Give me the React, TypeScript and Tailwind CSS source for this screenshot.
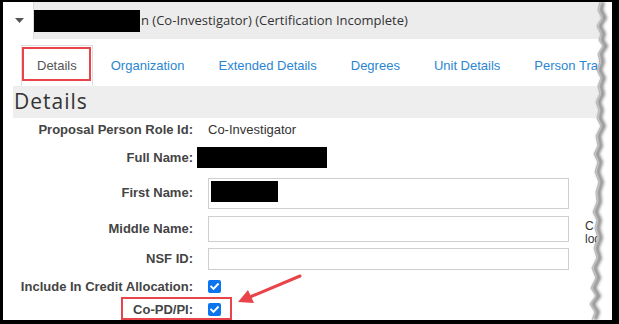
import React from "react";

const tabs = ["Details", "Organization", "Extended Details", "Degrees", "Unit Details", "Person Training"];

function Check() {
  return (
    <span className="flex h-[13px] w-[13px] items-center justify-center rounded-[2px] bg-[#0b74ee]">
      <svg width="11" height="11" viewBox="0 0 11 11">
        <path d="M2.2 5.6 L4.5 7.9 L8.9 3.2" fill="none" stroke="#fff" strokeWidth="1.9" strokeLinecap="square" />
      </svg>
    </span>
  );
}

function Row({ label, h, children }: { label: string; h: string; children?: React.ReactNode }) {
  return (
    <div className={`flex items-center ${h}`}>
      <div className="w-[190px] shrink-0 text-right text-[13px] font-bold text-[#444]">{label}</div>
      <div className="ml-[15px] flex flex-1 items-center">{children}</div>
    </div>
  );
}

export default function App() {
  const edge: [number, number][] = [
    [18, 0], [16, 8], [20, 16], [15, 24], [19, 32], [17, 38], [21, 44], [16, 52], [18, 60],
    [15, 68], [19, 76], [16, 84], [18, 92], [14, 100], [17, 108], [15, 116], [19, 124],
    [14, 134], [16, 144], [12, 152], [16, 160], [13, 170], [17, 180], [14, 190], [15, 200],
    [11, 210], [15, 218], [13, 226], [16, 236], [12, 246], [15, 256], [10, 266], [14, 276],
    [9, 286], [14, 294], [8, 302], [13, 310], [10, 318],
  ];
  const edgeStr = edge.map(([x, y]) => `${x},${y}`).join(" ");
  const poly = `${edgeStr} 30,318 30,0`;

  return (
    <div className="h-[324px] w-[619px] bg-black pb-[4px] pl-[3px] pr-[7px] pt-[2px] font-['Liberation_Sans',Arial,sans-serif]">
      <div className="relative flex h-full w-full flex-col overflow-hidden bg-white">
        {/* header */}
        <div className="flex h-[37px] shrink-0">
          <div className="flex w-[31px] shrink-0 items-center justify-center border-r border-[#dcdcdc] bg-white">
            <svg width="9" height="5" viewBox="0 0 9 5" className="ml-[2px]">
              <path d="M0 0 H9 L4.5 5 Z" fill="#555" />
            </svg>
          </div>
          <div className="flex flex-1 items-center bg-[#ececec]">
            <div className="h-[22px] w-[106px] bg-black" />
            <span className="ml-[1px] whitespace-nowrap font-['Open_Sans',sans-serif] text-[13px] text-[#333]">
              n (Co-Investigator) (Certification Incomplete)
            </span>
          </div>
        </div>

        {/* tabs */}
        <div className="flex h-[47px] shrink-0 items-end gap-[2px] overflow-hidden pl-[18px]">
          {tabs.map((t, i) => (
            <div
              key={t}
              className={`relative flex h-[41px] shrink-0 items-center whitespace-nowrap border px-[15px] text-[13px] ${
                i === 0 ? "border-[#dddddd] border-b-white bg-white text-[#555]" : "border-transparent text-[#2a86d3]"
              }`}
            >
              {t}
              {i === 0 && (
                <div className="absolute left-[0px] top-[1px] h-[34px] w-[69px] border-2 border-[#e8444a]" />
              )}
            </div>
          ))}
        </div>

        {/* heading */}
        <div className="ml-[10px] flex h-[32px] shrink-0 items-center bg-[#eeeeee] pl-[1px]">
          <span className="font-['Open_Sans',sans-serif] text-[21px] tracking-[1px] text-[#333]">Details</span>
        </div>

        {/* form */}
        <div className="flex flex-col">
          <Row label="Proposal Person Role Id:" h="h-[24px]">
            <span className="text-[13px] text-[#333]">Co-Investigator</span>
          </Row>
          <Row label="Full Name:" h="h-[31px]">
            <div className="ml-[-11px] h-[21px] w-[130px] bg-black" />
          </Row>
          <Row label="First Name:" h="h-[40px]">
            <div className="flex h-[31px] w-[361px] items-start border border-[#cfcfcf] pl-[2px] pt-[2px]">
              <div className="h-[21px] w-[67px] bg-black" />
            </div>
          </Row>
          <Row label="Middle Name:" h="h-[31px]">
            <div className="h-[26px] w-[361px] border border-[#cfcfcf]" />
            <div className="ml-[16px] mt-[9px] self-start text-[12px] leading-[13px] text-[#333]">
              C<br />log
            </div>
          </Row>
          <Row label="NSF ID:" h="h-[29px]">
            <div className="h-[22px] w-[361px] border border-[#cfcfcf]" />
          </Row>
          <Row label="Include In Credit Allocation:" h="h-[27px]">
            <Check />
          </Row>
          <Row label="Co-PD/PI:" h="h-[19px]">
            <Check />
          </Row>
        </div>

        {/* red box around Co-PD/PI */}
        <div className="absolute left-[118px] top-[295px] h-[23px] w-[111px] border-2 border-[#e8444a]" />

        {/* arrow */}
        <svg className="absolute left-[225px] top-[265px]" width="80" height="45" viewBox="0 0 80 45">
          <line x1="72" y1="9" x2="22" y2="30" stroke="#e8444a" strokeWidth="3" strokeLinecap="round" />
          <path d="M10 35 L20 23 L26 36 Z" fill="#e8444a" />
        </svg>

        {/* torn edge */}
        <svg className="absolute right-0 top-0" width="30" height="318" viewBox="0 0 30 318">
          <defs>
            <filter id="blur" x="-50%" y="-10%" width="200%" height="120%">
              <feGaussianBlur stdDeviation="1.6" />
            </filter>
          </defs>
          <polygon points={poly} fill="#ffffff" />
          <polyline
            points={edge.map(([x, y]) => `${x + 3},${y}`).join(" ")}
            fill="none"
            stroke="#8a8a8a"
            strokeWidth="4"
            filter="url(#blur)"
          />
          <polyline points={edgeStr} fill="none" stroke="#b5b5b5" strokeWidth="1" />
        </svg>
      </div>
    </div>
  );
}
